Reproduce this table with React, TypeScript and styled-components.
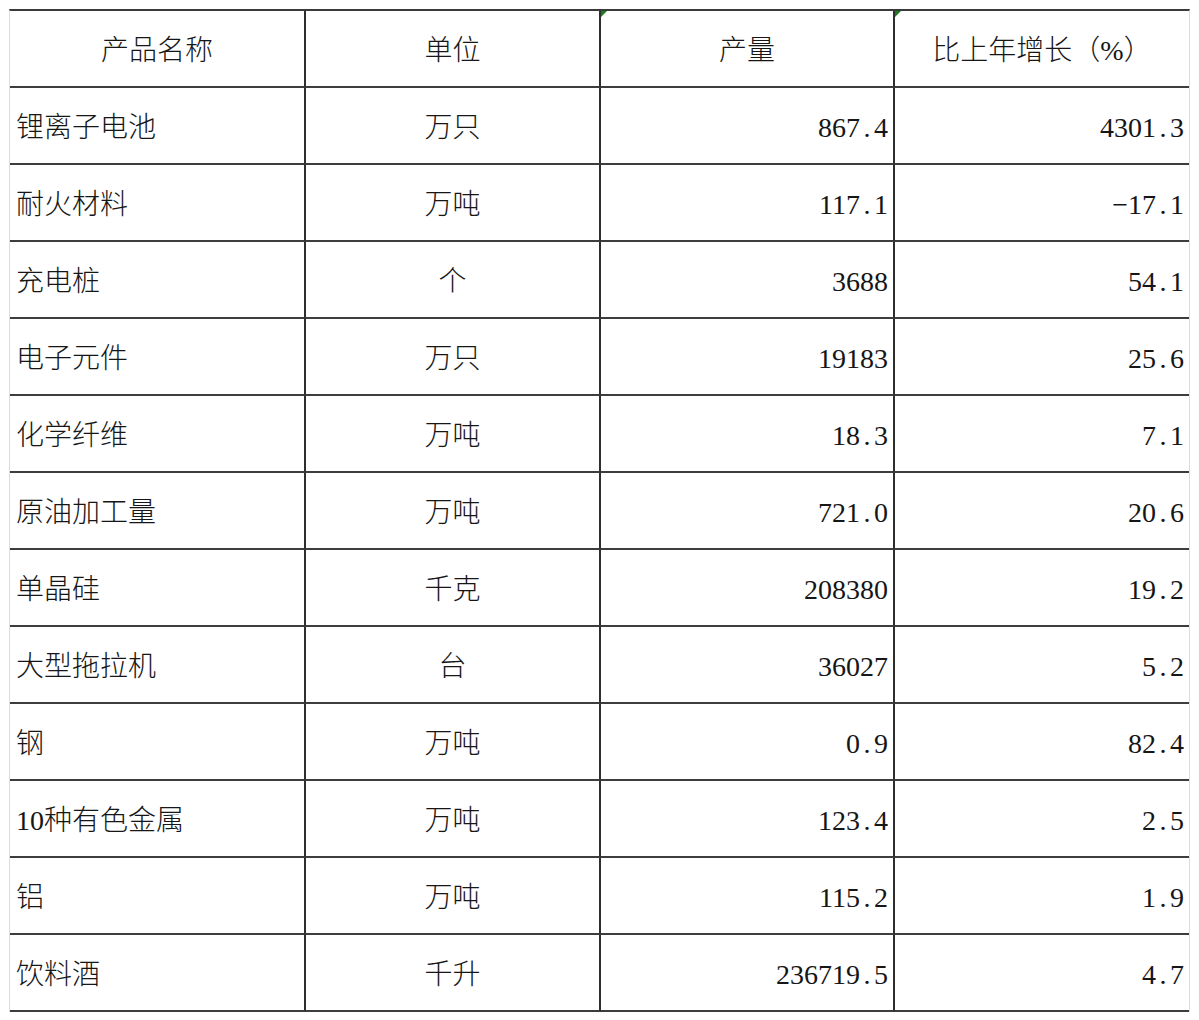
import styled, { createGlobalStyle } from "styled-components";

const GlobalStyle = createGlobalStyle`
  html, body {
    margin: 0;
    padding: 0;
    background: #fff;
  }
  body {
    font-family: "Liberation Serif", "Noto Sans CJK SC", serif;
    color: #161616;
  }
`;

type Row = {
  name: string;
  unit: string;
  output: string;
  growth: string;
};

const rows: Row[] = [
  { name: "锂离子电池", unit: "万只", output: "867.4", growth: "4301.3" },
  { name: "耐火材料", unit: "万吨", output: "117.1", growth: "−17.1" },
  { name: "充电桩", unit: "个", output: "3688", growth: "54.1" },
  { name: "电子元件", unit: "万只", output: "19183", growth: "25.6" },
  { name: "化学纤维", unit: "万吨", output: "18.3", growth: "7.1" },
  { name: "原油加工量", unit: "万吨", output: "721.0", growth: "20.6" },
  { name: "单晶硅", unit: "千克", output: "208380", growth: "19.2" },
  { name: "大型拖拉机", unit: "台", output: "36027", growth: "5.2" },
  { name: "钢", unit: "万吨", output: "0.9", growth: "82.4" },
  { name: "10种有色金属", unit: "万吨", output: "123.4", growth: "2.5" },
  { name: "铝", unit: "万吨", output: "115.2", growth: "1.9" },
  { name: "饮料酒", unit: "千升", output: "236719.5", growth: "4.7" },
];

// Excel 式半角数字：小数点占半个字宽
const Num = ({ value }: { value: string }) => {
  const [int, dec] = value.split(".");
  return (
    <>
      {int}
      {dec !== undefined && (
        <>
          <Dot>.</Dot>
          {dec}
        </>
      )}
    </>
  );
};

const App = () => {
  return (
    <>
      <GlobalStyle />
      <Sheet>
        <Cell $align="center">产品名称</Cell>
        <Cell $align="center">单位</Cell>
        <Cell $align="center" $flag>
          产量
        </Cell>
        <Cell $align="center" $flag $last>
          比上年增长（%）
        </Cell>
        {rows.map((r) => (
          <RowGroup key={r.name}>
            <Cell $align="left">{r.name}</Cell>
            <Cell $align="center">{r.unit}</Cell>
            <Cell $align="right">
              <Num value={r.output} />
            </Cell>
            <Cell $align="right" $last>
              <Num value={r.growth} />
            </Cell>
          </RowGroup>
        ))}
      </Sheet>
    </>
  );
};

const Sheet = styled.div`
  display: grid;
  grid-template-columns: 296px 295px 294px 294px;
  grid-auto-rows: 77px;
  width: fit-content;
  margin: 9px 0 0 9px;
  border-top: 2px solid #3a3a3a;
  border-left: 1px solid #dcdcdc;
  border-right: 1px solid #dcdcdc;
`;

const RowGroup = styled.div`
  display: contents;
`;

const Cell = styled.div<{
  $align: "left" | "center" | "right";
  $flag?: boolean;
  $last?: boolean;
}>`
  position: relative;
  display: flex;
  align-items: center;
  justify-content: ${(p) =>
    p.$align === "left" ? "flex-start" : p.$align === "right" ? "flex-end" : "center"};
  padding: 4px ${(p) => (p.$align === "right" ? "5px" : "0")} 0
    ${(p) => (p.$align === "left" ? "6px" : "0")};
  font-size: 28px;
  font-weight: 300;
  line-height: 1;
  white-space: nowrap;
  border-bottom: 2px solid #3d3d3d;
  border-right: ${(p) => (p.$last ? "none" : "2px solid #2e2e2e")};

  ${(p) =>
    p.$flag &&
    `
    &::before {
      content: "";
      position: absolute;
      top: 0;
      left: 0;
      border-top: 6px solid #1f7a1f;
      border-right: 6px solid transparent;
    }
  `}
`;

const Dot = styled.span`
  display: inline-block;
  width: 14px;
  text-align: center;
`;

export default App;
